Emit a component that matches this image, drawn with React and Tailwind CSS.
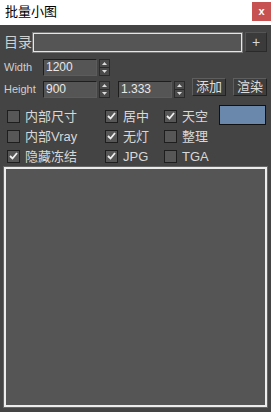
import React from "react";

const font = { fontFamily: '"Liberation Sans", "Noto Sans CJK SC", sans-serif' };

const Spinner = () => (
  <div className="flex flex-col w-[11px] h-[17px] border border-[#2a2a2a] bg-[#4a4a4a]">
    <div className="flex-1 flex items-center justify-center border-b border-[#2a2a2a]">
      <svg width="5" height="3" viewBox="0 0 5 3">
        <path d="M0 3 L2.5 0 L5 3 Z" fill="#ddd" />
      </svg>
    </div>
    <div className="flex-1 flex items-center justify-center">
      <svg width="5" height="3" viewBox="0 0 5 3">
        <path d="M0 0 L2.5 3 L5 0 Z" fill="#ddd" />
      </svg>
    </div>
  </div>
);

const NumField = ({ value, width = "w-[54px]" }) => (
  <div className="flex items-center gap-[2px]">
    <div
      className={`${width} h-[17px] bg-[#555] border border-[#1e1e1e] border-r-[#5c5c5c] border-b-[#5c5c5c] text-[12px] text-[#e8e8e8] leading-[15px] pl-[2px]`}
    >
      {value}
    </div>
    <Spinner />
  </div>
);

const Check = ({ checked, label }) => (
  <div className="flex items-center gap-[5px] h-[20px]">
    <div className="w-[13px] h-[13px] bg-[#575757] border border-[#1e1e1e] flex items-center justify-center">
      {checked && (
        <svg width="9" height="8" viewBox="0 0 9 8">
          <path d="M1 4 L3.5 6.5 L8 1" stroke="#f0f0f0" strokeWidth="1.8" fill="none" />
        </svg>
      )}
    </div>
    <span className="text-[13px] text-[#d8d8d8] leading-none">{label}</span>
  </div>
);

const SmallButton = ({ children }) => (
  <div className="h-[18px] px-[3px] bg-[#3e3e3e] border border-[#5e5e5e] border-r-[#222] border-b-[#222] text-[13px] text-[#dcdcdc] leading-[16px] flex items-center">
    {children}
  </div>
);

export default function App() {
  return (
    <div className="w-[271px] h-[412px] bg-[#444] flex flex-col" style={font}>
      <div className="h-[25px] bg-white flex items-start justify-between">
        <span className="text-[13px] text-black mt-[5px] ml-[5px] leading-none">批量小图</span>
        <div className="w-[19px] h-[19px] mt-[2px] bg-[#c75050] flex items-center justify-center text-white text-[11px] font-bold leading-none">
          x
        </div>
      </div>

      <div className="flex items-center mt-[7px] pl-[4px] pr-[4px] h-[20px]">
        <span className="text-[14px] text-[#d0d0d0] leading-none w-[29px]">目录</span>
        <div className="w-[209px] h-[19px] bg-[#555] border border-[#e6e6e6] outline outline-1 outline-[#777]" />
        <div className="ml-[3px] w-[22px] h-[20px] bg-[#3b3b3b] border border-[#2a2a2a] border-l-[#555] border-t-[#555] flex items-center justify-center text-[14px] text-[#d8d8d8] leading-none">
          +
        </div>
      </div>

      <div className="flex items-center mt-[6px] pl-[4px] h-[18px]">
        <span className="text-[11px] text-[#cfcfcf] w-[39px]">Width</span>
        <NumField value="1200" />
      </div>

      <div className="flex items-center mt-[4px] pl-[4px] h-[18px]">
        <span className="text-[11px] text-[#cfcfcf] w-[39px]">Height</span>
        <NumField value="900" />
        <div className="ml-[8px]">
          <NumField value="1.333" />
        </div>
        <div className="ml-[7px] -mt-[5px] flex gap-[7px]">
          <SmallButton>添加</SmallButton>
          <SmallButton>渲染</SmallButton>
        </div>
      </div>

      <div className="flex mt-[8px] pl-[7px]">
        <div className="w-[98px] flex flex-col">
          <Check label="内部尺寸" />
          <Check label="内部Vray" />
          <Check checked label="隐藏冻结" />
        </div>
        <div className="w-[59px] flex flex-col">
          <Check checked label="居中" />
          <Check checked label="无灯" />
          <Check checked label="JPG" />
        </div>
        <div className="w-[55px] flex flex-col">
          <Check checked label="天空" />
          <Check label="整理" />
          <Check label="TGA" />
        </div>
        <div className="w-[47px] h-[20px] mt-[-1px] bg-[#6a88ab] border border-[#111]" />
      </div>

      <div className="mx-[4px] mt-[1px] h-[240px] border-2 border-[#ececec] bg-[#555] outline outline-1 outline-[#666]" />
    </div>
  );
}
